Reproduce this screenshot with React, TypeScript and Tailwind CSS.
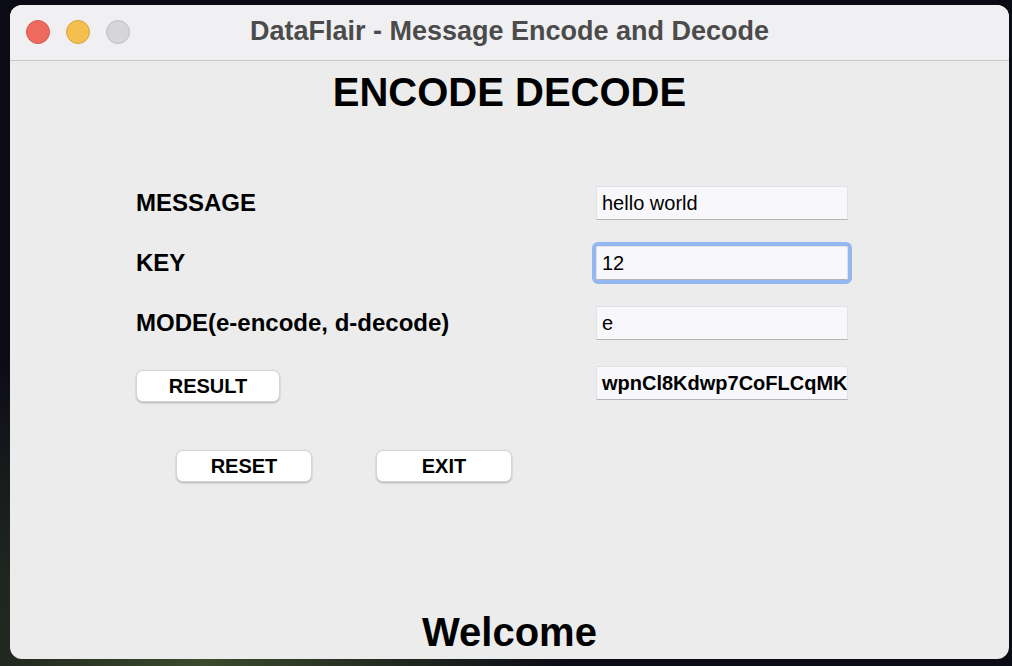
import React from "react";

const font = { fontFamily: '"Liberation Sans", Arial, sans-serif' };

const Field = ({ value, bold = false, focused = false }: { value: string; bold?: boolean; focused?: boolean }) => (
  <div
    className={`w-[252px] h-[34px] bg-[#f8f8fc] border border-[#e2e2e2] border-b-[#b4b4b4] flex items-center pl-[5px] overflow-hidden whitespace-nowrap text-[20px] text-black ${
      bold ? "font-bold" : ""
    } ${focused ? "rounded-[2px] outline outline-[4px] outline-[#93b7f0] border-[#93b7f0]" : ""}`}
  >
    {value}
  </div>
);

const Btn = ({ label, w }: { label: string; w: string }) => (
  <button
    className={`${w} h-[32px] bg-white rounded-[7px] border border-[#d4d4d4] shadow-[0_1px_2px_rgba(0,0,0,0.25)] text-[20px] font-bold text-black leading-none`}
  >
    {label}
  </button>
);

export default function App() {
  return (
    <div
      className="w-[1012px] h-[666px] overflow-hidden bg-[radial-gradient(circle_at_20%_100%,#3b4a2c_0%,#0b0b16_35%),linear-gradient(90deg,#0d1a12,#0a0a14_40%,#1e4f6a_70%,#0b0b14)] pt-[5px] pl-[10px]"
      style={font}
    >
      <div className="w-[999px] h-[654px] rounded-[12px] overflow-hidden flex flex-col bg-[#ececec]">
        {/* title bar */}
        <div className="h-[56px] shrink-0 bg-[#f0f0f2] border-b border-[#c9c9c9] relative flex items-center justify-center">
          <div className="absolute left-[16px] top-[15px] flex gap-[16px]">
            <span className="w-[24px] h-[24px] rounded-full bg-[#ee6a5f] border border-[#d9584e]" />
            <span className="w-[24px] h-[24px] rounded-full bg-[#f5bf4f] border border-[#d9a23a]" />
            <span className="w-[24px] h-[24px] rounded-full bg-[#d6d6d8] border border-[#bfbfc1]" />
          </div>
          <span className="text-[27px] font-bold text-[#4b4b4b] mt-[-2px]">DataFlair - Message Encode and Decode</span>
        </div>

        {/* content */}
        <div className="flex flex-col flex-1">
          <h1 className="text-center text-[40px] leading-[40px] font-bold text-black mt-[11px]">ENCODE DECODE</h1>

          <div className="pl-[126px] mt-[74px] flex flex-col gap-[26px]">
            <div className="flex items-center h-[34px]">
              <span className="w-[460px] text-[24px] font-bold text-black">MESSAGE</span>
              <Field value="hello world" />
            </div>
            <div className="flex items-center h-[34px]">
              <span className="w-[460px] text-[24px] font-bold text-black">KEY</span>
              <Field value="12" focused />
            </div>
            <div className="flex items-center h-[34px]">
              <span className="w-[460px] text-[24px] font-bold text-black">MODE(e-encode, d-decode)</span>
              <Field value="e" />
            </div>
            <div className="flex items-start h-[34px]">
              <div className="w-[460px] pt-[4px]">
                <Btn label="RESULT" w="w-[144px]" />
              </div>
              <Field value="wpnCl8Kdwp7CoFLCqMK" bold />
            </div>
          </div>

          <div className="pl-[166px] mt-[50px] flex gap-[64px]">
            <Btn label="RESET" w="w-[136px]" />
            <Btn label="EXIT" w="w-[136px]" />
          </div>

          <div className="text-center text-[40px] leading-[40px] font-bold text-black mt-[130px]">Welcome</div>
        </div>
      </div>
    </div>
  );
}
